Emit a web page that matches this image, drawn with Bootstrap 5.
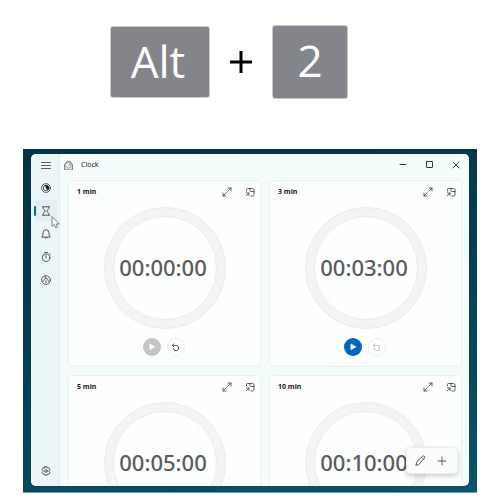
<!DOCTYPE html>
<html lang="en">
<head>
<meta charset="utf-8">
<meta name="viewport" content="width=device-width, initial-scale=1">
<title>Clock</title>
<link href="https://cdn.jsdelivr.net/npm/bootstrap@5.3.0/dist/css/bootstrap.min.css" rel="stylesheet">
<style>
body{font-family:"Noto Sans","Open Sans",sans-serif;background:#fff;font-size:7px;line-height:10px;color:#1b1b1b}
svg{display:block;fill:none;stroke:#4c4c4c;stroke-width:.9;stroke-linecap:round;stroke-linejoin:round}
button{background:none;border:0;padding:0;color:inherit}
.keys{height:124px;gap:19px;padding-right:42px}
kbd.keycap{font-family:"Open Sans","Noto Sans",sans-serif;font-weight:400;font-size:44px;line-height:68px;background:#84858a;border:1px solid #c9c9cb;border-radius:3px;color:#fff;text-align:center;padding:0}
kbd.key-wide{width:100px;height:72px;padding-right:4px}
.key-square{width:76px;height:74px}
.plus{width:24px;height:24px}
.plus path{stroke:#000;stroke-width:3;stroke-linecap:butt}
.desktop{margin:25px 23px 7px;padding:5px 8px 6px;background:linear-gradient(165deg,#053346,#063e53 50%,#0d536a);border-bottom:1px solid #6f9dab}
.app{background:#f3fbfb;border-radius:5px}
.side{width:29px;background:#ebf6f9;border-right:1px solid #e2eff1;padding-bottom:4px;padding-left:1px;gap:1px}
.side-btn{width:22px;height:22px;border-radius:3px}
.side-btn.current{background:#e5eef1}
.side-btn.current::before{content:"";position:absolute;left:-1px;top:6px;width:2px;height:10px;border-radius:1px;background:#0067c0}
.pointer{left:15px;top:16px;z-index:2}
.titlebar{height:26px;padding:0 9px 4px 4px;background:#f5fcfc}
.caption-btns{gap:17px}
.timers{display:grid;grid-template-columns:1fr 1fr;grid-auto-rows:187px;gap:8px;padding:0 7px 0 8px}
.timer{background:#fdfefe;border:1px solid #e9f1f1;border-radius:5px}
.timer-head{height:26px;padding:0 5px 4px 8px}
.timer-head h2{font-size:7px;line-height:10px;font-weight:700}
.timer-tools{gap:13px}
.ring{width:122px;height:122px;border:1px solid #ebecec;border-radius:50%;background:#f3f4f4;padding:8px}
.face{border:1px solid #ebecec;border-radius:50%;background:#fdfefe}
.time{font-size:22px;line-height:28px;font-weight:500;color:#5c5c5c;margin-right:3px;margin-bottom:3px}
.controls{gap:6px;padding:9px 2px 0 0}
.round{width:18px;height:18px;border-radius:50%}
.play{background:#c4c4c4}
.play.ready{background:#0067c0}
.play svg{fill:#fff;stroke:#fff}
.reset{border:1px solid #eeefef;background:#fff}
.reset:disabled svg{stroke:#bdbdbd}
.floating{right:11px;bottom:12px;width:52px;height:27px;padding-right:2px;border:1px solid #ededed;border-radius:4px;background:#fafbfb;box-shadow:0 2px 5px #0003}
.floating button{width:22px;height:24px}
</style>
<script src="https://cdn.jsdelivr.net/npm/bootstrap@5.3.0/dist/js/bootstrap.bundle.min.js"></script>
</head>
<body class="vh-100 d-flex flex-column overflow-hidden">
<svg width="0" height="0" class="position-absolute" aria-hidden="true">
<symbol id="expand" viewBox="0 0 10 10"><path d="M6 1h3v3M9 1 5.700 4.300M4.300 5.700 1 9M1 6v3h3"/></symbol>
<symbol id="pin" viewBox="0 0 10 10"><path d="M1.500 4V2.500q0-1 1-1h5q1.500 0 1.500 1.500v4.500q0 1.500-1.500 1.500H6M5 1.500v2q0 1 1 1h3M1.500 6H4v2.500M4 6 1.200 8.800"/></symbol>
<symbol id="play" viewBox="0 0 8 8"><path d="M2 1.500v5L6.500 4z"/></symbol>
<symbol id="reset" viewBox="0 0 9 9"><path d="M3 .8 1.300 2.400 3 4M1.500 2.400H5a2.700 2.700 0 1 1-2.700 3.100"/></symbol>
</svg>
<header class="keys d-flex flex-shrink-0 align-items-center justify-content-center">
<kbd class="keycap key-wide">Alt</kbd>
<svg class="plus" viewBox="0 0 24 24" role="img" aria-label="plus"><path d="M1 12h22M12 1v22"/></svg>
<kbd class="keycap key-square">2</kbd>
</header>
<section class="desktop d-flex flex-grow-1 overflow-hidden">
<div class="app d-flex flex-grow-1 position-relative overflow-hidden">
<nav class="side d-flex flex-column align-items-center flex-shrink-0" aria-label="Clock sections">
<button class="side-btn d-flex align-items-center justify-content-center" aria-label="Menu"><svg width="10" height="9" viewBox="0 0 10 9"><path d="M.5 1.500h9M.5 4.500h9M.5 7.500h9"/></svg></button>
<button class="side-btn d-flex align-items-center justify-content-center" aria-label="Focus sessions"><svg width="10" height="10" viewBox="0 0 10 10"><circle cx="5" cy="5" r="4.400"/><circle cx="5" cy="5" r="2.700"/><path d="M5 2.300V5l2 2q1.500-2 .2-3.700Q6.300 2.300 5 2.300z" fill="#222" stroke="#222"/></svg></button>
<button class="side-btn current position-relative d-flex align-items-center justify-content-center" aria-label="Timer"><svg width="10" height="10" viewBox="0 0 10 10"><path d="M1.500.8h7M2.200.8v1.700L4.300 5 2.200 7.500v1.700M7.800.8v1.700L5.700 5l2.100 2.500v1.700M1.500 9.200h7"/></svg>
<svg class="pointer position-absolute" width="10" height="13" viewBox="0 0 10 13"><path d="M2 1v9.500l2.200-2L5.800 12l1.700-.8L6 8h3z" fill="#fff" stroke="#777"/></svg></button>
<button class="side-btn d-flex align-items-center justify-content-center" aria-label="Alarm"><svg width="10" height="10" viewBox="0 0 10 10"><path d="M1 7.800 2 6V3.700a3 3 0 0 1 6 0V6l1 1.800zM3.800 8.600q1.200 1.400 2.400 0"/></svg></button>
<button class="side-btn d-flex align-items-center justify-content-center" aria-label="Stopwatch"><svg width="10" height="10" viewBox="0 0 10 10"><circle cx="5" cy="5.700" r="3.800"/><path d="M3.500.5h3M5 3.500V6M8.500 1.500l.8.800"/></svg></button>
<button class="side-btn d-flex align-items-center justify-content-center" aria-label="World clock"><svg width="10" height="10" viewBox="0 0 10 10"><circle cx="5" cy="5" r="4.400"/><path d="M4 1.200 4.500 3.200 1.800 7M4.500 3.200 6 3.500 8.200 7M5 5.500v2.200"/></svg></button>
<button class="side-btn mt-auto d-flex align-items-center justify-content-center" aria-label="Settings"><svg width="10" height="10" viewBox="0 0 10 10"><path d="m4 .7h2l.4 1.300 1.500-.3 1 1.700L8 4.500v1l.9 1.100-1 1.700-1.500-.3L6 9.300H4L3.600 8l-1.500.3-1-1.700L2 5.500v-1l-.9-1.100 1-1.700 1.500.3z"/><circle cx="5" cy="5" r="1.300"/></svg></button>
</nav>
<main class="flex-grow-1 overflow-hidden">
<div class="titlebar d-flex align-items-center justify-content-between">
<div class="d-flex align-items-center gap-2"><svg width="9" height="9" viewBox="0 0 9 9"><path d="M.5 8.500V3.500L2.500.7h4l2 2.800v5z" fill="#dde3e5" stroke="#777"/><circle cx="4.500" cy="4.200" r="2.800" fill="#fff" stroke="#999"/><path d="m4.500 4.800 1.700-2.200" stroke="#c65f3c"/></svg><span>Clock</span></div>
<div class="caption-btns d-flex align-items-center">
<button aria-label="Minimize"><svg width="9" height="10" viewBox="0 0 9 10"><path d="M1 4.500h6" stroke="#222"/></svg></button>
<button aria-label="Maximize"><svg width="9" height="10" viewBox="0 0 9 10"><rect x="1.500" y="1.500" width="6" height="6" rx=".5" stroke="#222"/></svg></button>
<button aria-label="Close"><svg width="9" height="10" viewBox="0 0 9 10"><path d="m2 2 6 6m0-6-6 6" stroke="#222"/></svg></button>
</div>
</div>
<div class="timers">
<article class="timer overflow-hidden">
<div class="timer-head d-flex align-items-center justify-content-between"><h2 class="m-0">1 min</h2><div class="timer-tools d-flex"><button aria-label="Expand"><svg width="10" height="10"><use href="#expand"/></svg></button><button aria-label="Keep on top"><svg width="10" height="10"><use href="#pin"/></svg></button></div></div>
<div class="ring d-flex mx-auto"><div class="face flex-grow-1 d-flex align-items-center justify-content-center"><span class="time">00:00:00</span></div></div>
<div class="controls d-flex justify-content-center"><button class="round play d-flex align-items-center justify-content-center" disabled aria-label="Start"><svg width="8" height="8"><use href="#play"/></svg></button><button class="round reset d-flex align-items-center justify-content-center" aria-label="Reset"><svg width="9" height="9"><use href="#reset"/></svg></button></div>
</article>
<article class="timer overflow-hidden">
<div class="timer-head d-flex align-items-center justify-content-between"><h2 class="m-0">3 min</h2><div class="timer-tools d-flex"><button aria-label="Expand"><svg width="10" height="10"><use href="#expand"/></svg></button><button aria-label="Keep on top"><svg width="10" height="10"><use href="#pin"/></svg></button></div></div>
<div class="ring d-flex mx-auto"><div class="face flex-grow-1 d-flex align-items-center justify-content-center"><span class="time">00:03:00</span></div></div>
<div class="controls d-flex justify-content-center"><button class="round play ready d-flex align-items-center justify-content-center" aria-label="Start"><svg width="8" height="8"><use href="#play"/></svg></button><button class="round reset d-flex align-items-center justify-content-center" disabled aria-label="Reset"><svg width="9" height="9"><use href="#reset"/></svg></button></div>
</article>
<article class="timer overflow-hidden">
<div class="timer-head d-flex align-items-center justify-content-between"><h2 class="m-0">5 min</h2><div class="timer-tools d-flex"><button aria-label="Expand"><svg width="10" height="10"><use href="#expand"/></svg></button><button aria-label="Keep on top"><svg width="10" height="10"><use href="#pin"/></svg></button></div></div>
<div class="ring d-flex mx-auto"><div class="face flex-grow-1 d-flex align-items-center justify-content-center"><span class="time">00:05:00</span></div></div>
</article>
<article class="timer overflow-hidden">
<div class="timer-head d-flex align-items-center justify-content-between"><h2 class="m-0">10 min</h2><div class="timer-tools d-flex"><button aria-label="Expand"><svg width="10" height="10"><use href="#expand"/></svg></button><button aria-label="Keep on top"><svg width="10" height="10"><use href="#pin"/></svg></button></div></div>
<div class="ring d-flex mx-auto"><div class="face flex-grow-1 d-flex align-items-center justify-content-center"><span class="time">00:10:00</span></div></div>
</article>
</div>
</main>
<div class="floating position-absolute d-flex align-items-center justify-content-center">
<button class="d-flex align-items-center justify-content-center" aria-label="Edit timers"><svg width="11" height="11" viewBox="0 0 11 11"><path d="m1 10 .7-3L7.500 1.200q1-.7 1.800.1.900.9.200 1.800L4 9.200zM6.500 2.300l2 2"/></svg></button>
<button class="d-flex align-items-center justify-content-center" aria-label="Add timer"><svg width="10" height="10" viewBox="0 0 10 10"><path d="M1 5h8M5 1v8"/></svg></button>
</div>
</div>
</section>
</body>
</html>
